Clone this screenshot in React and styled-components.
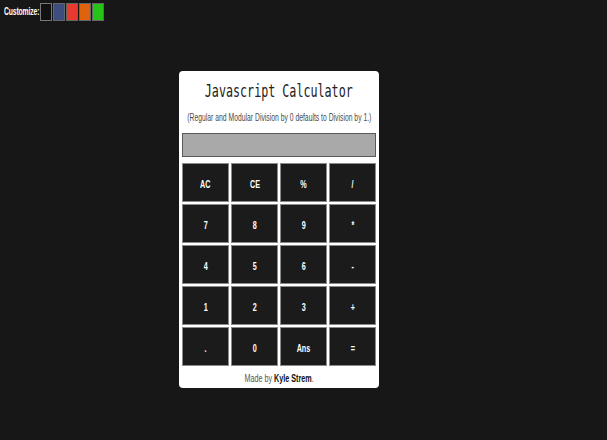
import React from "react";
import styled, { createGlobalStyle } from "styled-components";

const Global = createGlobalStyle`
  html, body {
    margin: 0;
    padding: 0;
    background: #171717;
    font-family: "Liberation Sans", Arial, sans-serif;
  }
`;

const Page = styled.div`
  width: 607px;
  height: 440px;
  background: #171717;
  overflow: hidden;
`;

const Toolbar = styled.div`
  display: flex;
  align-items: flex-start;
  padding: 3px 0 0 4px;
  height: 19px;
`;

const Squeeze = styled.span`
  display: inline-block;
  flex: none;
  white-space: nowrap;
  transform: scaleX(${({ $x }) => $x || 0.7});
  transform-origin: ${({ $origin }) => $origin || "center"};
`;

const ToolLabel = styled.div`
  width: 36px;
  color: #fff;
  font-size: 10px;
  font-weight: bold;
  line-height: 18px;
  letter-spacing: -0.2px;
`;

const Swatches = styled.div`
  display: flex;
  gap: 1px;
`;

const Swatch = styled.div`
  width: 12px;
  height: 18px;
  box-sizing: border-box;
  background: ${({ $color }) => $color};
  border: 1px solid ${({ $edge }) => $edge || "#555"};
`;

const Card = styled.div`
  width: 200px;
  box-sizing: border-box;
  margin: 49px 0 0 179px;
  padding: 0 3px;
  background: #fff;
  border-radius: 4px;
`;

const Centered = styled.div`
  display: flex;
  justify-content: center;
  align-items: center;
`;

const Title = styled(Centered)`
  height: 36px;
  padding-top: 2px;
  box-sizing: border-box;
  font-family: "DejaVu Sans Mono", "Liberation Mono", monospace;
  font-size: 18px;
  color: #222;
`;

const Subtitle = styled(Centered)`
  height: 20px;
  font-size: 10px;
  color: #4a4a4a;
`;

const Display = styled.div`
  margin-top: 6px;
  height: 24px;
  box-sizing: border-box;
  background: #a9a9a9;
  border: 1px solid #5a5a5a;
`;

const Keys = styled.div`
  margin-top: 6px;
  display: grid;
  grid-template-columns: repeat(4, 47px);
  grid-auto-rows: 39px;
  gap: 2px;
`;

const Key = styled.button`
  margin: 0;
  padding: 3px 0 0;
  box-sizing: border-box;
  background: #1b1b1b;
  border: 1px solid #8a8a8a;
  color: #fff;
  font-family: "Liberation Sans", Arial, sans-serif;
  font-size: 10px;
  font-weight: bold;
  display: flex;
  align-items: center;
  justify-content: center;
  cursor: pointer;
`;

const Footer = styled(Centered)`
  height: 22px;
  padding-top: 3px;
  box-sizing: border-box;
  font-size: 10px;
  color: #555;
`;

const Author = styled.span`
  color: #111;
  font-weight: bold;
`;

const swatches = [
  { color: "#111", edge: "#777" },
  { color: "#3d4e7e", edge: "#666" },
  { color: "#e83a2f", edge: "#666" },
  { color: "#de630c", edge: "#666" },
  { color: "#25c417", edge: "#666" },
];

const keys = [
  "AC", "CE", "%", "/",
  "7", "8", "9", "*",
  "4", "5", "6", "-",
  "1", "2", "3", "+",
  ".", "0", "Ans", "=",
];

export default function App() {
  return (
    <Page>
      <Global />
      <Toolbar>
        <ToolLabel>
          <Squeeze $x={0.68} $origin="left">Customize:</Squeeze>
        </ToolLabel>
        <Swatches>
          {swatches.map((s, i) => (
            <Swatch key={i} $color={s.color} $edge={s.edge} />
          ))}
        </Swatches>
      </Toolbar>
      <Card>
        <Title>
          <Squeeze $x={0.65}>Javascript Calculator</Squeeze>
        </Title>
        <Subtitle>
          <Squeeze $x={0.68}>
            (Regular and Modular Division by 0 defaults to Division by 1.)
          </Squeeze>
        </Subtitle>
        <Display />
        <Keys>
          {keys.map((k) => (
            <Key key={k}>
              <Squeeze $x={0.72}>{k}</Squeeze>
            </Key>
          ))}
        </Keys>
        <Footer>
          <Squeeze $x={0.72}>
            Made by <Author>Kyle Strem</Author>.
          </Squeeze>
        </Footer>
      </Card>
    </Page>
  );
}
